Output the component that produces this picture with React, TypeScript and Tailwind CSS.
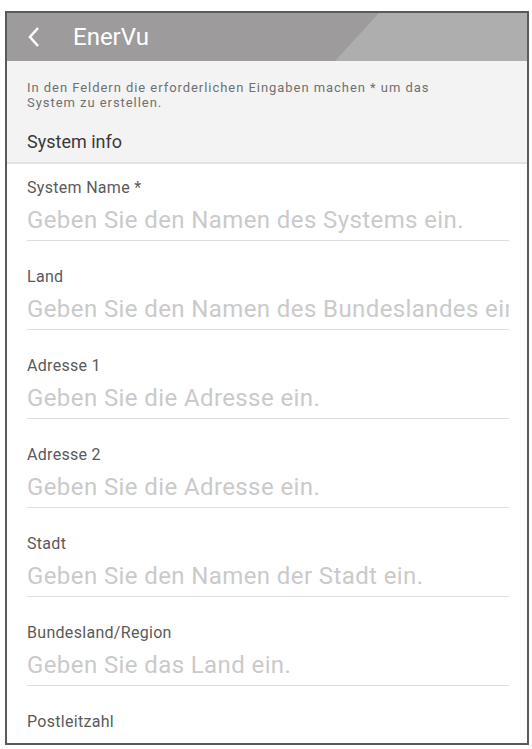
import React from "react";

const fields: { label: string; placeholder: string }[] = [
  { label: "System Name *", placeholder: "Geben Sie den Namen des Systems ein." },
  { label: "Land", placeholder: "Geben Sie den Namen des Bundeslandes ein." },
  { label: "Adresse 1", placeholder: "Geben Sie die Adresse ein." },
  { label: "Adresse 2", placeholder: "Geben Sie die Adresse ein." },
  { label: "Stadt", placeholder: "Geben Sie den Namen der Stadt ein." },
  { label: "Bundesland/Region", placeholder: "Geben Sie das Land ein." },
  { label: "Postleitzahl", placeholder: "Geben Sie die Postleitzahl ein." },
];

function Field({ label, placeholder }: { label: string; placeholder: string }) {
  return (
    <div className="flex flex-col">
      <div className="h-[20px] text-[16px] leading-[20px] tracking-[0.3px] text-[#5a5a5a]">{label}</div>
      <div className="mt-[8px] border-b border-[#dedede] pb-[6px]">
        <div className="h-[28px] overflow-hidden whitespace-nowrap text-[24px] leading-[28px] tracking-[0.4px] text-[#cacaca]">
          {placeholder}
        </div>
      </div>
    </div>
  );
}

export default function App() {
  return (
    <div
      className="h-[749px] w-[532px] bg-white pl-[5px] pr-[3px] pt-[11px]"
      style={{ fontFamily: "Roboto, 'Noto Sans', sans-serif" }}
    >
      <div className="flex h-[734px] flex-col overflow-hidden border-2 border-[#5a5a5a] bg-white">
        {/* app bar */}
        <div className="relative flex h-[48px] shrink-0 items-center bg-[#9d9b9b]">
          <div className="absolute inset-0 bg-[#aeaeae] [clip-path:polygon(372px_0,100%_0,100%_100%,328px_100%)]" />
          <svg className="relative ml-[20px]" width="14" height="22" viewBox="0 0 14 22">
            <polyline points="11,2 3,11 11,20" fill="none" stroke="#ffffff" strokeWidth="2.6" />
          </svg>
          <span className="relative ml-[32px] text-[24px] leading-none text-white">EnerVu</span>
        </div>

        {/* intro panel */}
        <div className="h-[103px] shrink-0 border-b-2 border-[#e2e2e2] bg-[#f3f3f3] px-[20px] pt-[19px]">
          <p className="text-[13px] leading-[15px] tracking-[0.95px] text-[#707070]">
            In den Feldern die erforderlichen Eingaben machen * um das
            <br />
            System zu erstellen.
          </p>
          <div className="mt-[21px] text-[18px] leading-[22px] text-[#3a3a3a]">System info</div>
        </div>

        {/* form */}
        <div className="flex flex-col gap-[26px] pl-[20px] pr-[18px] pt-[14px]">
          {fields.map((f) => (
            <Field key={f.label} label={f.label} placeholder={f.placeholder} />
          ))}
        </div>
      </div>
    </div>
  );
}
